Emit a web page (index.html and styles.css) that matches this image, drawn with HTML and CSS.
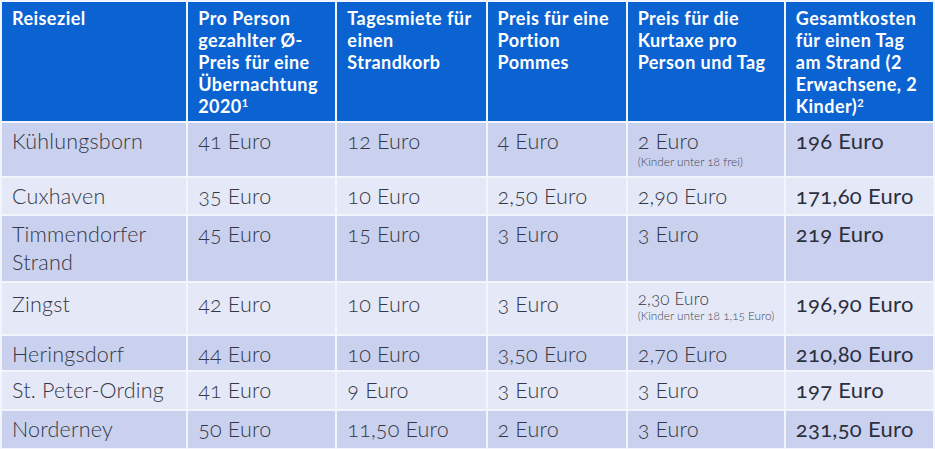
FILE: index.html
```html
<!DOCTYPE html>
<html lang="de">
<head>
<meta charset="utf-8">
<title>Reiseziele</title>
<link rel="stylesheet" href="styles.css">
</head>
<body>
<table class="costs">
  <colgroup>
    <col class="c1"><col class="c2"><col class="c3"><col class="c4"><col class="c5"><col class="c6">
  </colgroup>
  <thead>
    <tr class="head">
      <th>Reiseziel</th>
      <th>Pro Person<br>gezahlter Ø-<br>Preis für eine<br>Übernachtung<br>2020<sup>1</sup></th>
      <th>Tagesmiete für<br>einen<br>Strandkorb</th>
      <th>Preis für eine<br>Portion<br>Pommes</th>
      <th>Preis für die<br>Kurtaxe pro<br>Person und Tag</th>
      <th>Gesamtkosten<br>für einen Tag<br>am Strand (2<br>Erwachsene, 2<br>Kinder)<sup>2</sup></th>
    </tr>
  </thead>
  <tbody>
    <tr class="dark h53">
      <td>Kühlungsborn</td><td>41 Euro</td><td>12 Euro</td><td>4 Euro</td>
      <td>2 Euro<span class="note">(Kinder unter 18 frei)</span></td><td class="total">196 Euro</td>
    </tr>
    <tr class="light h36">
      <td>Cuxhaven</td><td>35 Euro</td><td>10 Euro</td><td>2,50 Euro</td><td>2,90 Euro</td><td class="total">171,60 Euro</td>
    </tr>
    <tr class="dark h65">
      <td>Timmendorfer<br>Strand</td><td>45 Euro</td><td>15 Euro</td><td>3 Euro</td><td>3 Euro</td><td class="total">219 Euro</td>
    </tr>
    <tr class="light h48 mid">
      <td>Zingst</td><td>42 Euro</td><td>10 Euro</td><td>3 Euro</td>
      <td class="small"><span class="sm">2,30 Euro</span><span class="note">(Kinder unter 18 1,15 Euro)</span></td><td class="total">196,90 Euro</td>
    </tr>
    <tr class="dark h34">
      <td>Heringsdorf</td><td>44 Euro</td><td>10 Euro</td><td>3,50 Euro</td><td>2,70 Euro</td><td class="total">210,80 Euro</td>
    </tr>
    <tr class="light h37">
      <td>St. Peter-Ording</td><td>41 Euro</td><td>9 Euro</td><td>3 Euro</td><td>3 Euro</td><td class="total">197 Euro</td>
    </tr>
    <tr class="dark h37">
      <td>Norderney</td><td>50 Euro</td><td>11,50 Euro</td><td>2 Euro</td><td>3 Euro</td><td class="total">231,50 Euro</td>
    </tr>
  </tbody>
</table>
</body>
</html>
```
FILE: styles.css
```css
html, body {
  margin: 0;
  padding: 0;
  background: #ffffff;
}
.costs {
  table-layout: fixed;
  border-collapse: separate;
  border-spacing: 2px;
  width: 935px;
  background: #f3f5fc;
  font-family: Lato, "Open Sans", sans-serif;
  font-variant-numeric: oldstyle-nums;
}
.c1 { width: 184px; }
.c2 { width: 147px; }
.c3 { width: 148px; }
.c4 { width: 138px; }
.c5 { width: 156px; }
.c6 { width: 147px; }

.head th {
  background: #0b63d2;
  color: #ffffff;
  font-weight: 700;
  font-size: 18px;
  line-height: 22px;
  text-align: left;
  vertical-align: top;
  padding: 5px 4px 0 10px;
  height: 114px;
  font-variant-numeric: lining-nums;
  letter-spacing: 0.45px;
  white-space: nowrap;
  overflow: hidden;
}
.head th sup {
  font-size: 11px;
  line-height: 0;
  vertical-align: 6px;
}
td {
  font-weight: 300;
  font-size: 21.5px;
  line-height: 28px;
  color: #343846;
  vertical-align: top;
  text-align: left;
  padding: 4px 4px 0 10px;
  white-space: nowrap;
  overflow: hidden;
  letter-spacing: 0.2px;
}
.dark td { background: #cad1ee; }
.light td { background: #e5e8f7; }
.h53 td { height: 49px; }
.h36 td { height: 32px; }
.h65 td { height: 61px; }
.h48 td { height: 44px; }
.h34 td { height: 30px; }
.h37 td { height: 33px; }
.mid td { padding-top: 7px; }
.mid td.small { padding-top: 6px; }
td.total {
  font-weight: 400;
  color: #2b2f3e;
  font-size: 22px;
  letter-spacing: 0.3px;
}
.note {
  display: block;
  font-size: 11.8px;
  line-height: 14px;
  color: #444857;
  letter-spacing: 0;
}
.sm {
  display: block;
  font-size: 17px;
  line-height: 20px;
  letter-spacing: 0.2px;
}
```
